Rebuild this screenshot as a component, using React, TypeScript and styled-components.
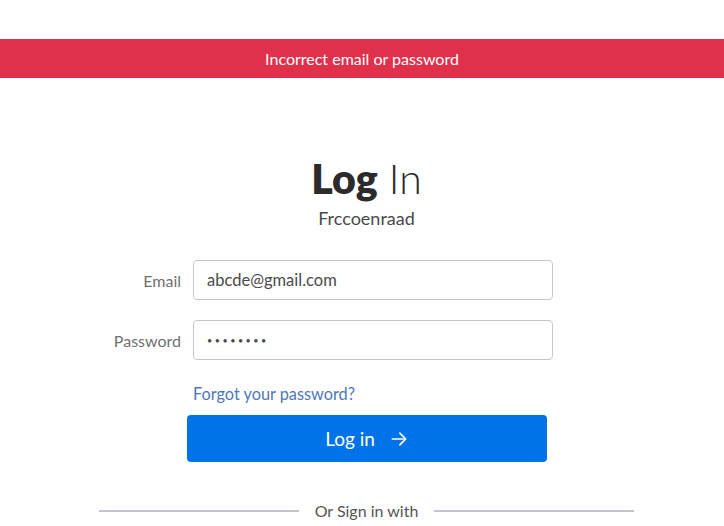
import { FC } from "react";
import styled, { createGlobalStyle } from "styled-components";

const GlobalStyle = createGlobalStyle`
    body {
        margin: 0;
        background: #fff;
        font-family: Lato, "Noto Sans", sans-serif;
        color: #333;
    }
`;

export const App: FC = () => {
    return (
        <SPage>
            <GlobalStyle />
            <SBanner>Incorrect email or password</SBanner>
            <SMain>
                <STitle>
                    <b>Log</b> In
                </STitle>
                <SSub>Frccoenraad</SSub>
                <SForm>
                    <SLabel>Email</SLabel>
                    <SInput type="text" defaultValue="abcde@gmail.com" />
                    <SLabel>Password</SLabel>
                    <SInput type="password" defaultValue="abcdefgh" $secret />
                    <span />
                    <SLink href="#">Forgot your password?</SLink>
                </SForm>
                <SButton>
                    Log in
                    <svg width="20" height="20" viewBox="0 0 24 24" fill="none" stroke="currentColor" strokeWidth="2" strokeLinecap="round" strokeLinejoin="round">
                        <path d="M4 12h15" />
                        <path d="M13 5l7 7-7 7" />
                    </svg>
                </SButton>
                <SDivider>
                    <SLine />
                    <span>Or Sign in with</span>
                    <SLine />
                </SDivider>
            </SMain>
        </SPage>
    );
};

export default App;

const SPage = styled.div`
    padding-top: 39px;
    width: 724px;
    height: 487px;
    overflow: hidden;
`;

const SBanner = styled.div`
    height: 39px;
    background: #e0304b;
    color: #fff;
    font-size: 16px;
    display: flex;
    align-items: center;
    justify-content: center;
`;

const SMain = styled.div`
    width: 535px;
    margin-left: 99px;
    display: flex;
    flex-direction: column;
`;

const STitle = styled.h1`
    margin: 77px 0 0;
    text-align: center;
    font-size: 41px;
    font-weight: 300;
    color: #2b2b2b;
    line-height: 48px;
    b {
        font-weight: 800;
    }
`;

const SSub = styled.div`
    text-align: center;
    font-size: 18px;
    color: #4a4a4a;
    margin-top: 4px;
`;

const SForm = styled.div`
    display: grid;
    grid-template-columns: 82px 360px;
    column-gap: 12px;
    row-gap: 20px;
    align-items: center;
    margin-top: 31px;
`;

const SLabel = styled.label`
    text-align: right;
    font-size: 16px;
    color: #707070;
`;

const SInput = styled.input<{ $secret?: boolean }>`
    box-sizing: border-box;
    height: 40px;
    border: 1px solid #c8c8c8;
    border-radius: 4px;
    padding: 0 13px;
    font-family: Lato, "Noto Sans", sans-serif;
    font-size: ${(p) => (p.$secret ? "9px" : "16.5px")};
    letter-spacing: ${(p) => (p.$secret ? "2.5px" : "0")};
    color: #4a4a4a;
    outline: none;
`;

const SLink = styled.a`
    font-size: 16.3px;
    color: #4f78b8;
    text-decoration: none;
    margin-top: 4px;
`;

const SButton = styled.button`
    margin: 12px 0 0 88px;
    width: 360px;
    height: 47px;
    border: none;
    border-radius: 4px;
    background: #0073e9;
    color: #fff;
    font-family: Lato, "Noto Sans", sans-serif;
    font-size: 19px;
    display: flex;
    align-items: center;
    justify-content: center;
    gap: 14px;
`;

const SDivider = styled.div`
    margin-top: 39px;
    display: flex;
    align-items: center;
    gap: 16px;
    font-size: 16px;
    color: #555;
`;

const SLine = styled.div`
    flex: 1;
    height: 2px;
    background: #c3c4cc;
`;
